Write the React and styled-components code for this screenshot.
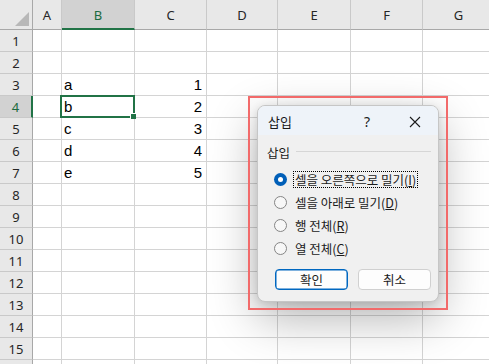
import React from "react";
import styled, { createGlobalStyle, css } from "styled-components";

const Global = createGlobalStyle`
  html, body { margin: 0; padding: 0; background: #fff; overflow: hidden; }
  body { width: 489px; height: 364px; }
`;

const Page = styled.div`
  position: relative;
  width: 489px;
  height: 364px;
  overflow: hidden;
  background: #fff;
`;

const Sheet = styled.div`
  display: grid;
  grid-template-columns: 33px 29px 73px 72px 71px 73px 72px 72px;
  grid-template-rows: 30px;
  grid-auto-rows: 22px;
  width: max-content;
`;

const Cell = styled.div`
  position: relative;
  box-sizing: border-box;
  border-right: 1px solid #d4d4d4;
  border-bottom: 1px solid #d4d4d4;
  display: flex;
  align-items: flex-end;
  justify-content: ${(p) => (p.$num ? "flex-end" : "flex-start")};
  padding: 0 4px 1px 2px;
  font-family: "Liberation Sans", Arial, sans-serif;
  font-size: 15px;
  line-height: 18px;
  color: #000;
`;

const Head = styled.div`
  position: relative;
  box-sizing: border-box;
  display: flex;
  align-items: center;
  justify-content: center;
  background: ${(p) => (p.$sel ? "#d2d2d2" : "#e8e8e8")};
  color: ${(p) => (p.$sel ? "#1c6b40" : "#262626")};
  font-family: "Noto Sans", "Liberation Sans", sans-serif;
  font-size: 13px;
  ${(p) =>
    p.$col
      ? css`
          border-right: 1px solid #c9c9c9;
          border-bottom: ${p.$sel ? "2px solid #217346" : "1px solid #a8a8a8"};
          padding-top: ${p.$sel ? "1px" : "0"};
        `
      : css`
          border-bottom: 1px solid #c9c9c9;
          border-right: ${p.$sel ? "2px solid #217346" : "1px solid #a8a8a8"};
          padding-top: 1px;
        `}
`;

const Corner = styled.div`
  position: relative;
  box-sizing: border-box;
  background: #e8e8e8;
  border-right: 1px solid #a8a8a8;
  border-bottom: 1px solid #a8a8a8;
  display: flex;
  align-items: flex-end;
  justify-content: flex-end;
  padding: 0 3px 3px 0;
`;

const Selection = styled.div`
  position: absolute;
  left: -2px;
  top: -1px;
  right: -1px;
  bottom: -1px;
  border: 2px solid #217346;
  pointer-events: none;
  z-index: 2;
`;

const Handle = styled.div`
  position: absolute;
  right: -3px;
  bottom: -3px;
  width: 5px;
  height: 5px;
  background: #217346;
  border: 1px solid #fff;
  border-right: none;
  border-bottom: none;
`;

const Annotation = styled.div`
  position: absolute;
  left: 248px;
  top: 96px;
  width: 200px;
  height: 214px;
  box-sizing: border-box;
  border: 2px solid #f26a6a;
  z-index: 6;
  pointer-events: none;
`;

const Dialog = styled.div`
  position: absolute;
  left: 257px;
  top: 105px;
  width: 182px;
  height: 197px;
  box-sizing: border-box;
  border: 1px solid #c6c6c6;
  border-radius: 8px;
  background: #f0f0f0;
  overflow: hidden;
  box-shadow: 0 16px 48px rgba(0, 0, 0, 0.3), 0 2px 8px rgba(0, 0, 0, 0.12);
  z-index: 5;
  display: flex;
  flex-direction: column;
  font-family: "Noto Sans CJK KR", "Noto Sans", sans-serif;
  font-size: 12.5px;
  color: #1b1b1b;
`;

const TitleBar = styled.div`
  height: 29px;
  background: #eef3f9;
  display: flex;
  align-items: center;
  padding: 2px 0 0 10px;
  box-sizing: border-box;
`;

const TitleText = styled.div`
  flex: 1;
  font-size: 13px;
`;

const Help = styled.div`
  width: 12px;
  margin-right: 35px;
  font-family: "Noto Sans", sans-serif;
  font-size: 14px;
  text-align: center;
`;

const Close = styled.div`
  width: 14px;
  height: 14px;
  margin-right: 16px;
  display: flex;
  align-items: center;
  justify-content: center;
`;

const Body = styled.div`
  flex: 1;
  display: flex;
  flex-direction: column;
  padding: 8px 7px 0 9px;
`;

const GroupHead = styled.div`
  height: 18px;
  display: flex;
  align-items: center;
  gap: 6px;
  margin-bottom: 7px;
`;

const GroupLine = styled.div`
  flex: 1;
  height: 1px;
  background: #d6d6d6;
  margin-top: -1px;
`;

const Options = styled.div`
  display: flex;
  flex-direction: column;
  padding-left: 7px;
`;

const Option = styled.div`
  height: 23px;
  display: flex;
  align-items: center;
  gap: 6px;
`;

const Radio = styled.div`
  width: 13px;
  height: 13px;
  box-sizing: border-box;
  border-radius: 50%;
  flex: none;
  display: flex;
  align-items: center;
  justify-content: center;
  ${(p) =>
    p.$on
      ? css`
          background: #005fb8;
          &::after {
            content: "";
            width: 5px;
            height: 5px;
            border-radius: 50%;
            background: #fff;
          }
        `
      : css`
          background: #f7f7f7;
          border: 1px solid #858585;
        `}
`;

const Label = styled.span`
  padding: 0 1px;
  line-height: 15px;
  border: 1px dotted ${(p) => (p.$focus ? "#000" : "transparent")};
`;

const Buttons = styled.div`
  display: flex;
  justify-content: space-between;
  margin-top: 9px;
  padding-left: 8px;
`;

const Button = styled.div`
  width: 73px;
  height: 21px;
  box-sizing: border-box;
  border-radius: 4px;
  display: flex;
  align-items: center;
  justify-content: center;
  background: #fdfdfd;
  border: 1px solid ${(p) => (p.$primary ? "#0067c0" : "#d0d0d0")};
  ${(p) => p.$primary && css`box-shadow: inset 0 0 0 0.5px #0067c0;`}
`;

const cols = ["A", "B", "C", "D", "E", "F", "G"];
const data = { 3: ["a", 1], 4: ["b", 2], 5: ["c", 3], 6: ["d", 4], 7: ["e", 5] };

export default function App() {
  const rows = Array.from({ length: 16 }, (_, i) => i + 1);
  return (
    <Page>
      <Global />
      <Sheet>
        <Corner>
          <svg width="14" height="14" viewBox="0 0 14 14">
            <polygon points="0,14 14,0 14,14" fill="#b8b8b8" />
          </svg>
        </Corner>
        {cols.map((c) => (
          <Head key={c} $col $sel={c === "B"}>
            {c}
          </Head>
        ))}
        {rows.map((r) => (
          <React.Fragment key={r}>
            <Head $sel={r === 4}>{r <= 15 ? r : ""}</Head>
            {cols.map((c) => {
              const d = data[r];
              const text = d ? (c === "B" ? d[0] : c === "C" ? d[1] : "") : "";
              return (
                <Cell key={c} $num={c === "C"}>
                  {text}
                  {r === 4 && c === "B" && (
                    <Selection>
                      <Handle />
                    </Selection>
                  )}
                </Cell>
              );
            })}
          </React.Fragment>
        ))}
      </Sheet>

      <Dialog>
        <TitleBar>
          <TitleText>삽입</TitleText>
          <Help>?</Help>
          <Close>
            <svg width="12" height="12" viewBox="0 0 12 12">
              <path d="M1 1 L11 11 M11 1 L1 11" stroke="#1b1b1b" strokeWidth="1.1" />
            </svg>
          </Close>
        </TitleBar>
        <Body>
          <GroupHead>
            <span>삽입</span>
            <GroupLine />
          </GroupHead>
          <Options>
            <Option>
              <Radio $on />
              <Label $focus>
                셀을 오른쪽으로 밀기(<u>I</u>)
              </Label>
            </Option>
            <Option>
              <Radio />
              <Label>
                셀을 아래로 밀기(<u>D</u>)
              </Label>
            </Option>
            <Option>
              <Radio />
              <Label>
                행 전체(<u>R</u>)
              </Label>
            </Option>
            <Option>
              <Radio />
              <Label>
                열 전체(<u>C</u>)
              </Label>
            </Option>
          </Options>
          <Buttons>
            <Button $primary>확인</Button>
            <Button>취소</Button>
          </Buttons>
        </Body>
      </Dialog>
      <Annotation />
    </Page>
  );
}
